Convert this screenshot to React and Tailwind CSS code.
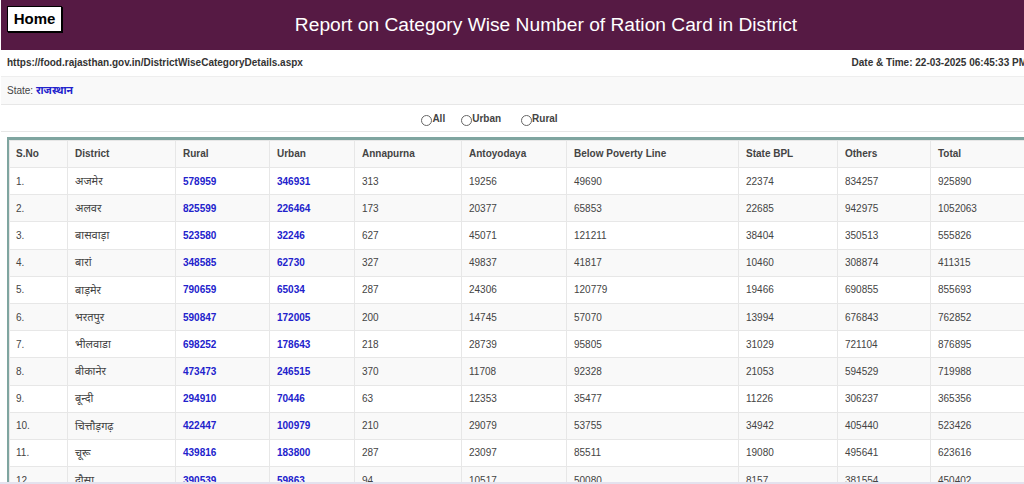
import React from "react";

const rows = [
  ["1.", "अजमेर", "578959", "346931", "313", "19256", "49690", "22374", "834257", "925890"],
  ["2.", "अलवर", "825599", "226464", "173", "20377", "65853", "22685", "942975", "1052063"],
  ["3.", "बासवाड़ा", "523580", "32246", "627", "45071", "121211", "38404", "350513", "555826"],
  ["4.", "बारां", "348585", "62730", "327", "49837", "41817", "10460", "308874", "411315"],
  ["5.", "बाड़मेर", "790659", "65034", "287", "24306", "120779", "19466", "690855", "855693"],
  ["6.", "भरतपुर", "590847", "172005", "200", "14745", "57070", "13994", "676843", "762852"],
  ["7.", "भीलवाडा", "698252", "178643", "218", "28739", "95805", "31029", "721104", "876895"],
  ["8.", "बीकानेर", "473473", "246515", "370", "11708", "92328", "21053", "594529", "719988"],
  ["9.", "बून्दी", "294910", "70446", "63", "12353", "35477", "11226", "306237", "365356"],
  ["10.", "चित्तौड़गढ़", "422447", "100979", "210", "29079", "53755", "34942", "405440", "523426"],
  ["11.", "चूरू", "439816", "183800", "287", "23097", "85511", "19080", "495641", "623616"],
  ["12.", "दौसा", "390539", "59863", "94", "10517", "50080", "8157", "381554", "450402"],
];

const heads = ["S.No", "District", "Rural", "Urban", "Annapurna", "Antoyodaya", "Below Poverty Line", "State BPL", "Others", "Total"];
const widths = [58, 108, 94, 85, 107, 105, 172, 99, 93, 120];

const Radio = ({ label, className }) => (
  <label className={"flex items-start " + (className || "")}>
    <span className="mt-[4px] h-[11px] w-[11px] rounded-full border border-[#666] bg-white" />
    <span>{label}</span>
  </label>
);

const cellClass = (j) => {
  if (j === 0) return "border border-[#e7e7e7] pl-[6px]";
  if (j === 1) return "border border-[#e7e7e7] pl-[7px] text-[11px]";
  if (j === 2 || j === 3) return "border border-[#e7e7e7] pl-[7px] font-bold text-[#2222cc]";
  return "border border-[#e7e7e7] pl-[7px]";
};

export default function App() {
  return (
    <div className="relative h-[484px] w-[1024px] overflow-hidden bg-white pl-px font-['Liberation_Sans','Noto_Sans',sans-serif] text-[10px] text-[#444]">
      <header className="relative flex h-[50px] items-center justify-center bg-[#561a44] pl-[67px] text-[19.2px] text-white">
        <a className="absolute left-[6px] top-[6px] flex h-[26px] w-[55px] items-center justify-center border border-black bg-white text-[15px] font-bold text-black shadow-[1px_1px_0_#000]">
          Home
        </a>
        <h1>Report on Category Wise Number of Ration Card in District</h1>
      </header>

      <div className="flex h-[27px] items-center justify-between whitespace-nowrap border-b border-[#eee] pb-[2px] pl-[6px] font-bold text-[#333]">
        <span>https://food.rajasthan.gov.in/DistrictWiseCategoryDetails.aspx</span>
        <span className="-mr-[3px]">Date &amp; Time: 22-03-2025 06:45:33 PM</span>
      </div>

      <div className="flex h-[28px] items-center border-b border-[#e7e7e7] bg-[#f9f9f9] pl-[6px]">
        State:&nbsp;<b className="text-[10.5px] text-[#2222cc]">राजस्थान</b>
      </div>

      <div className="flex h-[27px] items-start justify-center gap-[16px] border-b border-[#e7e7e7] pr-[46px] pt-[6px] font-bold">
        <Radio label="All" />
        <Radio label="Urban" />
        <Radio label="Rural" className="ml-[4px]" />
      </div>

      <div className="ml-[6px] mt-[5px] w-[1100px] border-l-[2px] border-t-[3px] border-[#7fa5a0]">
        <table className="table-fixed border-collapse">
          <colgroup>
            {widths.map((w, i) => (
              <col key={i} style={{ width: w }} />
            ))}
          </colgroup>
          <thead>
            <tr className="h-[27px] bg-[#f9f9f9]">
              {heads.map((h, i) => (
                <th
                  key={h}
                  className={
                    i === 0
                      ? "border border-[#e7e7e7] pb-[2px] pl-[6px] text-left font-bold"
                      : "border border-[#e7e7e7] pb-[2px] pl-[7px] text-left font-bold"
                  }
                >
                  {h}
                </th>
              ))}
            </tr>
          </thead>
          <tbody>
            {rows.map((r, i) => (
              <tr key={r[0]} className={i % 2 ? "h-[27.2px] bg-[#f9f9f9]" : "h-[27.2px] bg-white"}>
                {r.map((c, j) => (
                  <td key={j} className={cellClass(j)}>
                    {c}
                  </td>
                ))}
              </tr>
            ))}
          </tbody>
        </table>
      </div>

      {/* strip at the very bottom of the window */}
      <div className="absolute inset-x-0 bottom-0 h-[2px] bg-[#e4e2ee]" />
    </div>
  );
}
